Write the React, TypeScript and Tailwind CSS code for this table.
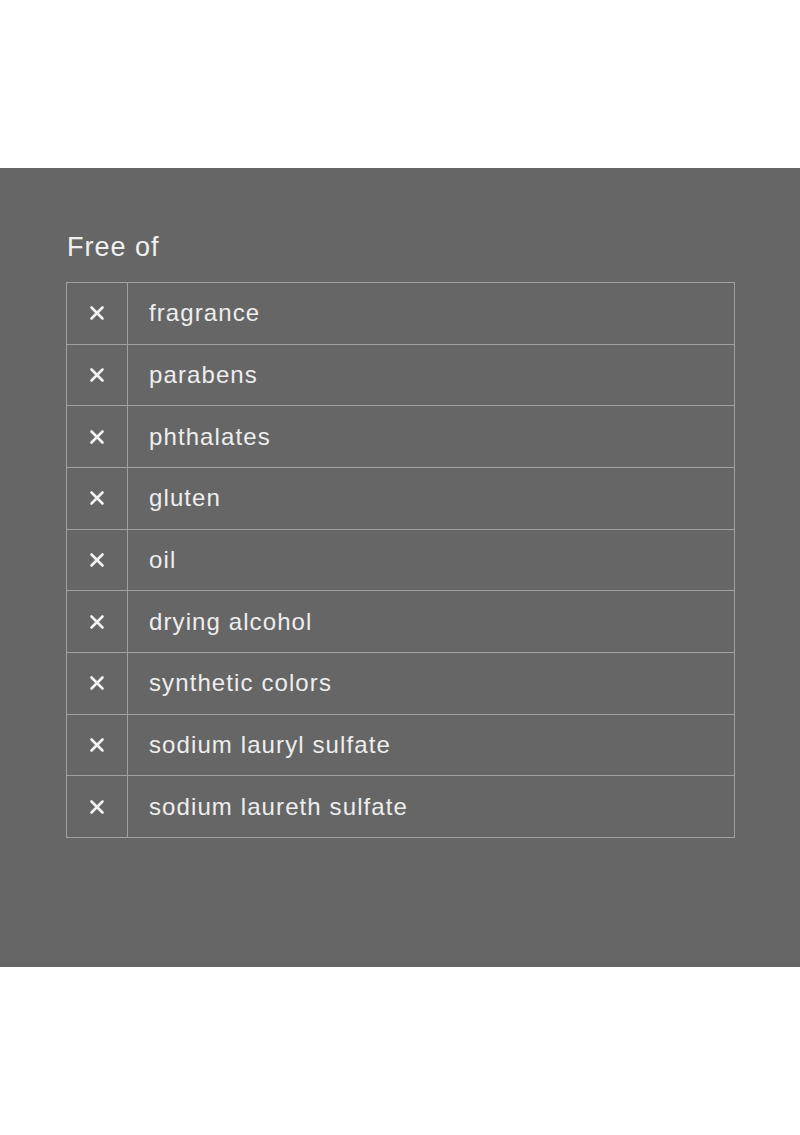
const ITEMS = [
  'fragrance',
  'parabens',
  'phthalates',
  'gluten',
  'oil',
  'drying alcohol',
  'synthetic colors',
  'sodium lauryl sulfate',
  'sodium laureth sulfate',
];

function XMark() {
  return (
    <svg width="16" height="16" viewBox="0 0 16 16" className="block">
      <path d="M2.5 2.5 L13.5 13.5 M13.5 2.5 L2.5 13.5" stroke="#f2f2f2" strokeWidth="2.6" strokeLinecap="round" />
    </svg>
  );
}

export default function App() {
  return (
    <div className="w-[800px] h-[1135px] bg-white font-['Liberation_Sans',Arial,sans-serif]">
      <div className="h-[168px]" />
      <div className="h-[799px] bg-[#666666] pt-[63px] px-[66px]">
        <h2 className="text-[27px] leading-[32px] text-[#f0f0f0] tracking-[1px] mb-[19px] pl-[1px]">Free of</h2>
        <div className="w-[669px] border-t border-l border-r border-[#a0a0a0]">
          {ITEMS.map((item) => (
            <div key={item} className="flex h-[61.67px] border-b border-[#a0a0a0]">
              <div className="w-[61px] shrink-0 flex items-center justify-center border-r border-[#a0a0a0]">
                <XMark />
              </div>
              <div className="flex items-center pl-[21px] text-[24px] text-[#eeeeee] tracking-[1.1px]">{item}</div>
            </div>
          ))}
        </div>
      </div>
    </div>
  );
}
